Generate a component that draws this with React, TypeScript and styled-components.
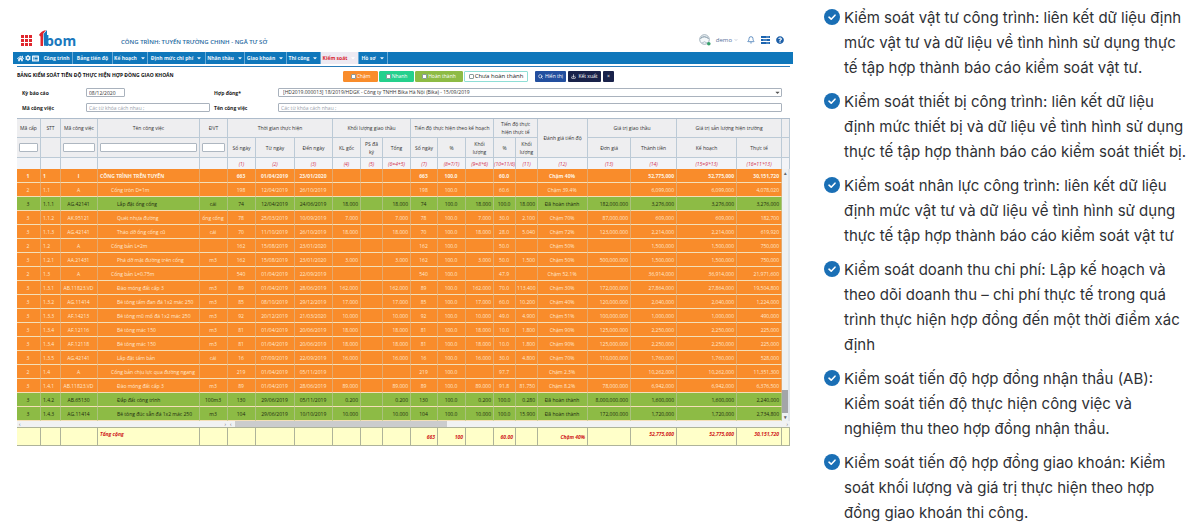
import React from "react";
import styled, { createGlobalStyle, css } from "styled-components";
import { FaHome, FaCog, FaListAlt, FaQuestionCircle, FaCaretDown } from "react-icons/fa";
import { Bell, Search, Download, ChevronDown } from "lucide-react";

const GlobalStyle = createGlobalStyle`
  *, *::before, *::after { box-sizing: border-box; }
  body { margin: 0; background: #fff; }
  button, input, select { font: inherit; margin: 0; }
`;

const Page = styled.main`
  display: grid;
  grid-template-columns: minmax(0, 1fr) 376px;
  column-gap: 31px;
  padding-left: 13px;
  color: #333;
`;

/* ---------- application panel ---------- */

const AppPanel = styled.section`
  padding-top: 28px;
  font: 5px/8px "Open Sans", "Noto Sans", sans-serif;
`;

const TopBar = styled.header`
  display: flex;
  align-items: center;
  height: 24px;
  padding: 0 9px 0 8px;
`;

const Logo = styled.svg`
  width: 56px;
  height: 20px;
  flex: none;
`;

const ProjectName = styled.h1`
  flex: 1;
  margin: 4px 0 0 44px;
  font-size: 6px;
  font-weight: 600;
  color: #2467a0;
`;

const UserTools = styled.div`
  display: flex;
  align-items: center;
  color: #1c5fa8;
`;

const UserName = styled.button`
  display: flex;
  align-items: center;
  gap: 2px;
  padding: 0;
  margin: 0 3px 0 5px;
  border: 0;
  background: none;
  font-size: 6px;
  color: #54709a;
`;

const ToolButton = styled.button`
  display: flex;
  padding: 0;
  margin-left: 6px;
  border: 0;
  background: none;
  color: inherit;
`;

const Nav = styled.nav`
  display: flex;
  align-items: stretch;
  height: 12px;
  padding-left: 4px;
  background: #0f77bb;
  color: #eaf4fb;
`;

const NavIcons = styled.div`
  display: flex;
  align-items: center;
  gap: 1px;
  width: 24px;
`;

const NavLink = styled.a<{ $width: number; $active?: boolean }>`
  display: flex;
  align-items: center;
  justify-content: center;
  gap: 3px;
  width: ${(p) => p.$width}px;
  border-right: 1px solid #6aaad6;
  font-weight: 700;
  white-space: nowrap;
  text-decoration: none;
  color: ${(p) => (p.$active ? "#d8232f" : "inherit")};
  background: ${(p) => (p.$active ? "#eeeaf2" : "none")};
`;

const Content = styled.div`
  margin: 2px 3px 0 4px;
  border-top: 1px solid #2c7cba;
`;

const TitleRow = styled.div`
  display: flex;
  align-items: center;
  padding: 3px 176px 0 0;
  height: 15px;
`;

const PanelTitle = styled.h2`
  flex: 1;
  margin: 0 0 3px;
  font-size: 5px;
  font-weight: 700;
  color: #111;
  white-space: nowrap;
`;

const StatusFilter = styled.label<{ $bg: string; $width: number; $outlined?: boolean }>`
  display: flex;
  align-items: center;
  justify-content: center;
  gap: 1px;
  width: ${(p) => p.$width}px;
  height: 11px;
  margin-right: 1px;
  border: 1px solid ${(p) => (p.$outlined ? "#8fded6" : p.$bg)};
  border-radius: 1px;
  background: ${(p) => p.$bg};
  color: ${(p) => (p.$outlined ? "#222" : "#fff")};
  font-size: ${(p) => (p.$outlined ? 6 : 5)}px;
  white-space: nowrap;
`;

const Tick = styled.input`
  appearance: none;
  width: 5px;
  height: 5px;
  border: 1px solid #8a9a9a;
  border-radius: 1px;
  background: #fff;
`;

const ActionButton = styled.button<{ $bg: string; $width: number }>`
  display: flex;
  align-items: center;
  justify-content: center;
  gap: 2px;
  width: ${(p) => p.$width}px;
  height: 11px;
  margin-left: 2px;
  padding: 0;
  border: 0;
  border-radius: 1px;
  background: ${(p) => p.$bg};
  color: #fff;
  white-space: nowrap;
`;

const ActionGroup = styled.div`
  display: flex;
  margin-left: 4px;
`;

const Filters = styled.form`
  display: grid;
  grid-template-columns: 64px 128px 64px minmax(0, 1fr);
  row-gap: 6px;
  align-items: center;
  padding: 6px 8px 6px 5px;
  border-bottom: 1px solid #aebccb;
`;

const FieldLabel = styled.label`
  font-weight: 700;
  color: #222;
`;

const control = css`
  display: block;
  height: 9px;
  padding: 0 2px;
  border: 1px solid #a9b2bd;
  border-radius: 1px;
  background: #fff;
  color: #333;
  line-height: 7px;
`;

const TextField = styled.input<{ $width?: string }>`
  ${control}
  width: ${(p) => p.$width ?? "100%"};
  &::placeholder { color: #98a1ab; opacity: 1; }
`;

const SelectWrap = styled.div`
  position: relative;
  svg { position: absolute; right: 1px; top: 1px; color: #555; pointer-events: none; }
`;

const SelectField = styled.select`
  ${control}
  appearance: none;
  width: 100%;
  padding-left: 4px;
`;

const Grid = styled.table`
  width: 100%;
  table-layout: fixed;
  border-collapse: separate;
  border-spacing: 0;
`;

const HeadCell = styled.th`
  padding: 0 1px;
  border-right: 1px solid #bccad6;
  border-bottom: 1px solid #bccad6;
  background: #eeeef0;
  color: #333;
  font-weight: 400;
  overflow: hidden;
`;

const HeadRow = styled.tr<{ $height: number }>`
  height: ${(p) => p.$height}px;
`;

const FormulaCell = styled(HeadCell)`
  padding: 0;
  background: #f3f4f7;
  color: #d2304f;
  font-style: italic;
  white-space: nowrap;
  line-height: 6px;
  border-bottom: 0;
`;

const ColumnFilter = styled.input`
  display: block;
  width: calc(100% - 2px);
  height: 9px;
  margin: 0 auto;
  padding: 0 1px;
  border: 1px solid #aeb7c1;
  border-radius: 1px;
  background: #fff;
`;

type Align = "left" | "center" | "right";

const DataRow = styled.tr<{ $done?: boolean; $bold?: boolean }>`
  height: 14px;
  background: ${(p) => (p.$done ? "#8dbb45" : "#f98c2b")};
  color: ${(p) => (p.$done ? "#1d2b10" : "#ffe8cf")};
  ${(p) => p.$bold && css`font-weight: 700; color: #fff3e2;`}
`;

const Cell = styled.td<{ $align: Align; $indent?: number }>`
  padding: 0 2px 0 ${(p) => p.$indent ?? 1}px;
  border-right: 1px solid rgba(205, 205, 190, 0.45);
  border-bottom: 1px solid #f4dfb8;
  text-align: ${(p) => p.$align};
  white-space: nowrap;
  overflow: hidden;
`;

const VScrollCell = styled.td`
  padding: 0;
  height: 252px;
  background: #eef1f3;
  border-right: 2px solid #dfe4e9;
`;

const VScroll = styled.div`
  display: flex;
  flex-direction: column;
  align-items: center;
  justify-content: space-between;
  height: 252px;
  color: #666;
`;

const VThumb = styled.div`
  width: 6px;
  height: 23px;
  margin-top: auto;
  background: #a3a5a8;
`;

const HScrollCell = styled.td`
  padding: 0;
  background: #f1f2f3;
`;

const HScroll = styled.div<{ $thumb?: string }>`
  display: flex;
  align-items: center;
  justify-content: space-between;
  height: 6px;
  padding: 0 2px;
  color: #555;
  span { width: ${(p) => p.$thumb ?? "0"}; height: 6px; margin: 0 auto 0 3px; background: #cbcccd; }
`;

const TotalCell = styled.td<{ $align: Align; $low?: boolean }>`
  height: 19px;
  padding: ${(p) => (p.$low ? 5 : 2)}px 2px 0;
  border: 0 solid #aeb39a;
  border-width: 1px 1px 1px 0;
  background: #ffffc9;
  color: #cf2020;
  font-weight: 700;
  font-style: italic;
  vertical-align: top;
  text-align: ${(p) => p.$align};
  white-space: nowrap;
`;

/* ---------- feature list ---------- */

const FeatureList = styled.ul`
  display: flex;
  flex-direction: column;
  gap: 9px;
  margin: 0;
  padding: 5px 0 0;
  list-style: none;
  font: 15px/25px Inter, sans-serif;
  color: #2f3135;
`;

const Feature = styled.li`
  display: grid;
  grid-template-columns: 20px 343px;
`;

const CheckIcon = styled.svg`
  width: 16px;
  height: 16px;
  margin-top: 4px;
`;

/* ---------- data ---------- */

const columnWidths = [24, 20, 37, 102, 28, 28, 39, 38, 28, 22, 28, 27, 28, 28, 22, 22, 50, 43, 46, 60, 45, 8];

const navItems: { label: string; width: number; menu?: boolean; active?: boolean }[] = [
  { label: "Công trình", width: 32 },
  { label: "Bảng tiến độ", width: 40 },
  { label: "Kế hoạch", width: 35, menu: true },
  { label: "Định mức chi phí", width: 58, menu: true },
  { label: "Nhân thầu", width: 39, menu: true },
  { label: "Giao khoán", width: 42, menu: true },
  { label: "Thi công", width: 34, menu: true },
  { label: "Kiểm soát", width: 38, menu: true, active: true },
  { label: "Hồ sơ", width: 29, menu: true },
];

const aligns: Align[] = [
  "center", "left", "center", "left", "center", "center", "center", "center", "right", "right", "right",
  "center", "center", "right", "center", "right", "center", "right", "right", "right", "right",
];

const rows: string[] = [
  "1|1|I|CÔNG TRÌNH TRÊN TUYẾN||663|01/04/2019|23/01/2020||||663|100.0||60.0||Chậm 40%||52,775,000|52,775,000|30,151,720",
  "2|1.1|A|Cống tròn D=1m||198|12/04/2019|26/10/2019||||198|100.0||60.6||Chậm 39.4%||6,099,000|6,099,000|4,078,020",
  "3|1.1.1|AG.42141|Lắp đặt ống cống|cái|74|12/04/2019|24/06/2019|18.000||18.000|74|100.0|18.000|100.0|18.000|Đã hoàn thành|182,000.000|3,276,000|3,276,000|3,276,000",
  "3|1.1.2|AK.95121|Quét nhựa đường|ống cống|78|25/03/2019|10/09/2019|7.000||7.000|78|100.0|7.000|30.0|2.100|Chậm 70%|87,000.000|609,000|609,000|182,700",
  "3|1.1.3|AG.42141|Tháo dỡ ống cống cũ|cái|70|11/10/2019|26/10/2019|18.000||18.000|70|100.0|18.000|28.0|5.040|Chậm 72%|123,000.000|2,214,000|2,214,000|619,920",
  "2|1.2|A|Cống bản L=2m||162|15/08/2019|23/01/2020||||162|100.0||50.0||Chậm 50%||1,500,000|1,500,000|750,000",
  "3|1.2.1|AA.21431|Phá dỡ mặt đường trên cống|m3|162|15/08/2019|23/01/2020|3.000||3.000|162|100.0|3.000|50.0|1.500|Chậm 50%|500,000.000|1,500,000|1,500,000|750,000",
  "2|1.3|A|Cống bản L=0.75m||540|01/04/2019|22/09/2019||||540|100.0||47.9||Chậm 52.1%||36,914,000|36,914,000|21,971,600",
  "3|1.3.1|AB.11823.VD|Đào móng đất cấp 3|m3|89|01/04/2019|28/06/2019|162.000||162.000|89|100.0|162.000|70.0|113.400|Chậm 30%|172,000.000|27,864,000|27,864,000|19,504,800",
  "3|1.3.2|AG.11414|Bê tông tấm đan đá 1x2 mác 250|m3|85|08/10/2019|29/12/2019|17.000||17.000|85|100.0|17.000|60.0|10.200|Chậm 40%|120,000.000|2,040,000|2,040,000|1,224,000",
  "3|1.3.3|AF.14213|Bê tông mũ mố đá 1x2 mác 250|m3|92|20/12/2019|21/03/2020|10.000||10.000|92|100.0|10.000|49.0|4.900|Chậm 51%|100,000.000|1,000,000|1,000,000|490,000",
  "3|1.3.4|AF.12116|Bê tông mác 150|m3|81|01/04/2019|20/06/2019|18.000||18.000|81|100.0|18.000|10.0|1.800|Chậm 90%|125,000.000|2,250,000|2,250,000|225,000",
  "3|1.3.4|AF.12118|Bê tông mác 150|m3|81|01/04/2019|20/06/2019|18.000||18.000|81|100.0|18.000|10.0|1.800|Chậm 90%|125,000.000|2,250,000|2,250,000|225,000",
  "3|1.3.5|AG.42141|Lắp đặt tấm bản|cái|16|07/09/2019|22/09/2019|16.000||16.000|16|100.0|16.000|30.0|4.800|Chậm 70%|110,000.000|1,760,000|1,760,000|528,000",
  "2|1.4|A|Cống bản chịu lực qua đường ngang||219|01/04/2019|05/11/2019||||219|100.0||97.7||Chậm 2.3%||10,262,000|10,262,000|11,351,300",
  "3|1.4.1|AB.11823.VD|Đào móng đất cấp 3|m3|89|01/04/2019|28/06/2019|89.000||89.000|89|100.0|89.000|91.8|81.750|Chậm 8.2%|78,000.000|6,942,000|6,942,000|6,376,500",
  "3|1.4.2|AB.65130|Đắp đất công trình|100m3|130|29/06/2019|05/11/2019|0.200||0.200|130|100.0|0.200|100.0|0.280|Đã hoàn thành|8,000,000.000|1,600,000|1,600,000|2,240,000",
  "3|1.4.3|AG.11414|Bê tông đúc sẵn đá 1x2 mác 250|m3|104|29/06/2019|10/10/2019|10.000||10.000|104|100.0|10.000|100.0|15.900|Đã hoàn thành|172,000.000|1,720,000|1,720,000|2,734,800",
];

const formulas = [
  "", "", "", "", "", "(1)", "(2)", "(3)", "(4)", "(5)", "(6=4+5)", "(7)", "(8=7/1)", "(9=8*6)",
  "(10=11/6)", "(11)", "(12)", "(13)", "(14)", "(15=9*13)", "(16=11*13)", "",
];

const subHeads = ["Số ngày", "Từ ngày", "Đến ngày", "KL gốc", "PS đã ký", "Tổng", "Số ngày", "%", "Khối lượng", "%", "Khối lượng"];

const totals: Record<number, string> = {
  3: "Tổng cộng", 11: "663", 12: "100", 14: "60.00", 16: "Chậm 40%",
  18: "52,775,000", 19: "52,775,000", 20: "30,151,720",
};

const features = [
  "Kiểm soát vật tư công trình: liên kết dữ liệu định mức vật tư và dữ liệu về tình hình sử dụng thực tế tập hợp thành báo cáo kiểm soát vật tư.",
  "Kiểm soát thiết bị công trình: liên kết dữ liệu định mức thiết bị và dữ liệu về tình hình sử dụng thực tế tập hợp thành báo cáo kiểm soát thiết bị.",
  "Kiểm soát nhân lực công trình: liên kết dữ liệu định mức vật tư và dữ liệu về tình hình sử dụng thực tế tập hợp thành báo cáo kiểm soát vật tư",
  "Kiểm soát doanh thu chi phí: Lập kế hoạch và theo dõi doanh thu – chi phí thực tế trong quá trình thực hiện hợp đồng đến một thời điểm xác định",
  "Kiểm soát tiến độ hợp đồng nhận thầu (AB): Kiểm soát tiến độ thực hiện công việc và nghiệm thu theo hợp đồng nhận thầu.",
  "Kiểm soát tiến độ hợp đồng giao khoán: Kiểm soát khối lượng và giá trị thực hiện theo hợp đồng giao khoán thi công.",
];

const nameIndent = (level: string) => (level === "1" ? 2 : level === "2" ? 13 : 19);

function BrandLogo() {
  return (
    <Logo viewBox="0 0 56 20" role="img" aria-label="1bom">
      {[0, 1, 2].map((r) =>
        [0, 1, 2].map((c) => (
          <rect key={`${r}${c}`} x={c * 4} y={5 + r * 4} width="3" height="3" fill="#e0262d" />
        ))
      )}
      <path d="M18 5 Q20 1 25 0 L22 4 V16 H19.500 V6.500 Z" fill="#e0262d" />
      <path d="M22.500 4 L26 0 V15.800 H23 Z" fill="#1a78bd" />
      <text x="24" y="16" fontFamily="Open Sans, sans-serif" fontSize="14" fontWeight="700" fill="#1a78bd">bom</text>
    </Logo>
  );
}

function Avatar() {
  return (
    <svg width="12" height="12" viewBox="0 0 12 12" aria-hidden="true">
      <circle cx="5.5" cy="5.5" r="4.8" fill="#f5f9fb" stroke="#8a9dab" strokeWidth="0.8" />
      <path d="M1.5 4.5 Q5 1 9.5 4.5" fill="none" stroke="#71899a" strokeWidth="1" />
      <path d="M3 9 Q5.5 6.500 8 9" fill="none" stroke="#9db1bf" strokeWidth="0.8" />
      <circle cx="9.800" cy="9.800" r="1.800" fill="#35a06a" />
    </svg>
  );
}

function ServerIcon() {
  return (
    <svg width="9" height="8" viewBox="0 0 9 8" aria-hidden="true">
      <rect width="9" height="2" y="0" fill="#1c64b0" />
      <rect width="9" height="2" y="3" fill="#1c64b0" />
      <rect width="9" height="2" y="6" fill="#1c64b0" />
      <path d="M5 1H8M2 4H6M5 7H8" stroke="#b9d3ec" strokeWidth="0.6" />
    </svg>
  );
}

function DataGrid() {
  return (
    <Grid>
      <colgroup>
        {columnWidths.map((w, i) => (
          <col key={i} width={w} />
        ))}
      </colgroup>
      <thead>
        <HeadRow $height={19}>
          {["Mã cấp", "STT", "Mã công việc", "Tên công việc", "ĐVT"].map((h) => (
            <HeadCell key={h} scope="col">{h}</HeadCell>
          ))}
          <HeadCell colSpan={3}>Thời gian thực hiện</HeadCell>
          <HeadCell colSpan={3}>Khối lượng giao thầu</HeadCell>
          <HeadCell colSpan={3}>Tiến độ thực hiện theo kế hoạch</HeadCell>
          <HeadCell colSpan={2}>Tiến độ thực<br />hiện thực tế</HeadCell>
          <HeadCell rowSpan={2}>Đánh giá tiến độ</HeadCell>
          <HeadCell colSpan={2}>Giá trị giao thầu</HeadCell>
          <HeadCell colSpan={2}>Giá trị sản lượng hiện trường</HeadCell>
          <HeadCell as="td" />
        </HeadRow>
        <HeadRow $height={20}>
          <HeadCell as="td"><ColumnFilter aria-label="Mã cấp" /></HeadCell>
          <HeadCell as="td" />
          <HeadCell as="td"><ColumnFilter aria-label="Mã công việc" /></HeadCell>
          <HeadCell as="td"><ColumnFilter aria-label="Tên công việc" /></HeadCell>
          <HeadCell as="td"><ColumnFilter aria-label="ĐVT" /></HeadCell>
          {subHeads.map((h, i) => (
            <HeadCell key={i} scope="col">{h}</HeadCell>
          ))}
          {["Đơn giá", "Thành tiền", "Kế hoạch", "Thực tế"].map((h) => (
            <HeadCell key={h} scope="col">{h}</HeadCell>
          ))}
          <HeadCell as="td" />
        </HeadRow>
        <HeadRow $height={11}>
          {formulas.map((f, i) => (
            <FormulaCell as="td" align="center" key={i}>{f}</FormulaCell>
          ))}
        </HeadRow>
      </thead>
      <tbody>
        {rows.map((row, r) => {
          const cells = row.split("|");
          return (
            <DataRow key={r} $done={row.includes("Đã hoàn thành")} $bold={r === 0}>
              {cells.map((value, c) => (
                <Cell key={c} $align={aligns[c]} $indent={c === 3 ? nameIndent(cells[0]) : c === 1 ? 2 : undefined}>
                  {value}
                </Cell>
              ))}
              {r === 0 && (
                <VScrollCell rowSpan={rows.length}>
                  <VScroll><span>▴</span><VThumb /><span>▾</span></VScroll>
                </VScrollCell>
              )}
            </DataRow>
          );
        })}
        <tr>
          <HScrollCell colSpan={5}><HScroll>‹<span />›</HScroll></HScrollCell>
          <HScrollCell colSpan={17}><HScroll $thumb="38%">‹<span />›</HScroll></HScrollCell>
        </tr>
      </tbody>
      <tfoot>
        <tr>
          {columnWidths.map((_, i) => (
            <TotalCell key={i} $align={i === 3 ? "left" : "right"} $low={i > 10 && i < 17}>{totals[i]}</TotalCell>
          ))}
        </tr>
      </tfoot>
    </Grid>
  );
}

export default function App() {
  return (
    <Page>
      <GlobalStyle />
      <AppPanel>
        <TopBar>
          <BrandLogo />
          <ProjectName>CÔNG TRÌNH: TUYẾN TRƯỜNG CHINH - NGÃ TƯ SỞ</ProjectName>
          <UserTools>
            <Avatar />
            <UserName type="button">demo <ChevronDown size={4} /></UserName>
            <ToolButton type="button" aria-label="Thông báo"><Bell size={8} /></ToolButton>
            <ToolButton type="button" aria-label="Danh sách"><ServerIcon /></ToolButton>
            <ToolButton type="button" aria-label="Trợ giúp"><FaQuestionCircle size={8} /></ToolButton>
          </UserTools>
        </TopBar>
        <Nav>
          <NavIcons><FaHome size={7} /><FaCog size={6} /><FaListAlt size={7} /></NavIcons>
          {navItems.map((item) => (
            <NavLink key={item.label} href="#" $width={item.width} $active={item.active}>
              {item.label}
              {item.menu && <FaCaretDown size={6} color={item.active ? "#fff" : undefined} />}
            </NavLink>
          ))}
        </Nav>
        <Content>
          <TitleRow>
            <PanelTitle>BẢNG KIỂM SOÁT TIẾN ĐỘ THỰC HIỆN HỢP ĐỒNG GIAO KHOÁN</PanelTitle>
            <StatusFilter $bg="#f98c2b" $width={35}><Tick type="checkbox" />Chậm</StatusFilter>
            <StatusFilter $bg="#25d08d" $width={35}><Tick type="checkbox" />Nhanh</StatusFilter>
            <StatusFilter $bg="#8dbb45" $width={48}><Tick type="checkbox" />Hoàn thành</StatusFilter>
            <StatusFilter $bg="#fff" $width={64} $outlined><Tick type="checkbox" />Chưa hoàn thành</StatusFilter>
            <ActionGroup>
              <ActionButton type="button" $bg="#234f9f" $width={31}><Search size={5} strokeWidth={3} />Hiển thị</ActionButton>
              <ActionButton type="button" $bg="#19224a" $width={33}><Download size={5} strokeWidth={3} />Kết xuất</ActionButton>
              <ActionButton type="button" $bg="#19224a" $width={11} aria-label="Đóng">×</ActionButton>
            </ActionGroup>
          </TitleRow>
          <Filters>
            <FieldLabel htmlFor="period">Kỳ báo cáo</FieldLabel>
            <TextField id="period" defaultValue="08/12/2020" $width="39px" />
            <FieldLabel htmlFor="contract">Hợp đồng*</FieldLabel>
            <SelectWrap>
              <SelectField id="contract">
                <option>[HD2019.000013] 18/2019/HDGK - Công ty TNHH Bika Hà Nội (Bika) - 15/09/2019</option>
              </SelectField>
              <FaCaretDown size={7} />
            </SelectWrap>
            <FieldLabel htmlFor="code">Mã công việc</FieldLabel>
            <TextField id="code" placeholder="Các từ khóa cách nhau ;" $width="124px" />
            <FieldLabel htmlFor="name">Tên công việc</FieldLabel>
            <TextField id="name" placeholder="Các từ khóa cách nhau ;" />
          </Filters>
          <DataGrid />
        </Content>
      </AppPanel>
      <FeatureList>
        {features.map((text) => (
          <Feature key={text}>
            <CheckIcon viewBox="0 0 16 16" aria-hidden="true">
              <circle cx="8" cy="8" r="8" fill="#1a6fb5" />
              <path d="M5 8.200 L7.200 10.200 L11 6.200" fill="none" stroke="#fff" strokeWidth="1.600" strokeLinecap="round" strokeLinejoin="round" />
            </CheckIcon>
            <span>{text}</span>
          </Feature>
        ))}
      </FeatureList>
    </Page>
  );
}
